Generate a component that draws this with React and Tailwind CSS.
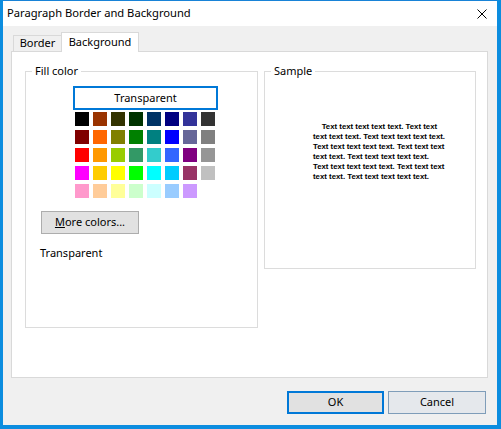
import React from "react";

const swatches = [
    ["#000000", "#993300", "#333300", "#003300", "#003366", "#000080", "#333399", "#333333"],
    ["#800000", "#ff6600", "#808000", "#008000", "#008080", "#0000ff", "#666699", "#808080"],
    ["#ff0000", "#ff9900", "#99cc00", "#339966", "#33cccc", "#3366ff", "#800080", "#969696"],
    ["#ff00ff", "#ffcc00", "#ffff00", "#00ff00", "#00ffff", "#00ccff", "#993366", "#c0c0c0"],
    ["#ff99cc", "#ffcc99", "#ffff99", "#ccffcc", "#ccffff", "#99ccff", "#cc99ff"],
];

const sampleLines = [
    "    Text text text text text. Text text",
    "text text text. Text text text text text.",
    "Text text text text text. Text text text",
    "text text. Text text text text text.",
    "Text text text text text. Text text text",
    "text text. Text text text text text.",
];

function GroupBox({ title, className, children }) {
    return (
        <fieldset className={`border border-[#dcdcdc] ${className}`}>
            <legend className="ml-[6px] px-[3px] leading-[16px]">{title}</legend>
            {children}
        </fieldset>
    );
}

export default function App() {
    return (
        <div
            className="w-[501px] h-[429px] bg-[#0c8ddf] flex text-[11px] text-black"
            style={{ fontFamily: '"Noto Sans", "Liberation Sans", sans-serif' }}
        >
            <div className="ml-[3px] mr-[4px] mb-[4px] flex-1 flex flex-col bg-[#f0f0f0] border-t border-[#1883d7]">
                {/* Title bar */}
                <div className="h-[25px] bg-white flex items-center justify-between pl-[4px] pr-[10px]">
                    <span className="text-[11.2px]">Paragraph Border and Background</span>
                    <svg width="10" height="10" viewBox="0 0 10 10" className="mt-[1px]">
                        <path d="M0.5 0.5 L9.5 9.5 M9.5 0.5 L0.5 9.5" stroke="#000" strokeWidth="1" />
                    </svg>
                </div>

                {/* Body */}
                <div className="flex-1 flex flex-col pt-[6px] pl-[8px] pr-[9px] pb-[11px]">
                    {/* Tabs */}
                    <div className="h-[19px] flex items-end pl-[2px]">
                        <div className="w-[49px] h-[16px] border border-b-0 border-[#d9d9d9] bg-[#f0f0f0] flex items-center justify-center">
                            Border
                        </div>
                        <div className="relative z-10 -ml-px -mb-px w-[78px] h-[20px] border border-b-0 border-[#d9d9d9] bg-white flex items-center justify-center pb-[1px]">
                            Background
                        </div>
                    </div>

                    {/* Tab panel */}
                    <div className="h-[327px] bg-white border border-[#d9d9d9] flex items-start gap-[6px] pl-[13px] pt-[11px]">
                        <GroupBox title="Fill color" className="w-[233px] h-[265px]">
                            <button className="mt-[7px] ml-[47px] w-[145px] h-[24px] border-2 border-[#0078d7] bg-white flex items-center justify-center">
                                Transparent
                            </button>
                            <div className="mt-[2px] ml-[49px] grid grid-cols-[repeat(8,14px)] gap-[4px]">
                                {swatches.flat().map((c, i) => (
                                    <div key={i} className="w-[14px] h-[14px]" style={{ backgroundColor: c }} />
                                ))}
                            </div>
                            <button className="mt-[13px] ml-[15px] w-[98px] h-[23px] bg-[#e1e1e1] border border-[#adadad] flex items-center justify-center">
                                <span><span className="underline">M</span>ore colors...</span>
                            </button>
                            <div className="mt-[11px] ml-[14px] leading-[16px]">Transparent</div>
                        </GroupBox>

                        <GroupBox title="Sample" className="w-[212px] h-[206px]">
                            <div
                                className="mt-[43px] ml-[48px] text-[7.8px] font-bold leading-[10px] whitespace-pre"
                                style={{ fontFamily: '"Liberation Sans", sans-serif' }}
                            >
                                {sampleLines.map((l, i) => (
                                    <div key={i}>{l}</div>
                                ))}
                            </div>
                        </GroupBox>
                    </div>

                    {/* Footer buttons */}
                    <div className="mt-[13px] flex justify-end gap-[4px] pr-[2px]">
                        <button className="w-[97px] h-[23px] bg-[#e1e1e1] border-2 border-[#0078d7] flex items-center justify-center">
                            OK
                        </button>
                        <button className="w-[98px] h-[23px] bg-[#e5e8ec] border border-[#7f9db9] flex items-center justify-center">
                            Cancel
                        </button>
                    </div>
                </div>
            </div>
        </div>
    );
}
